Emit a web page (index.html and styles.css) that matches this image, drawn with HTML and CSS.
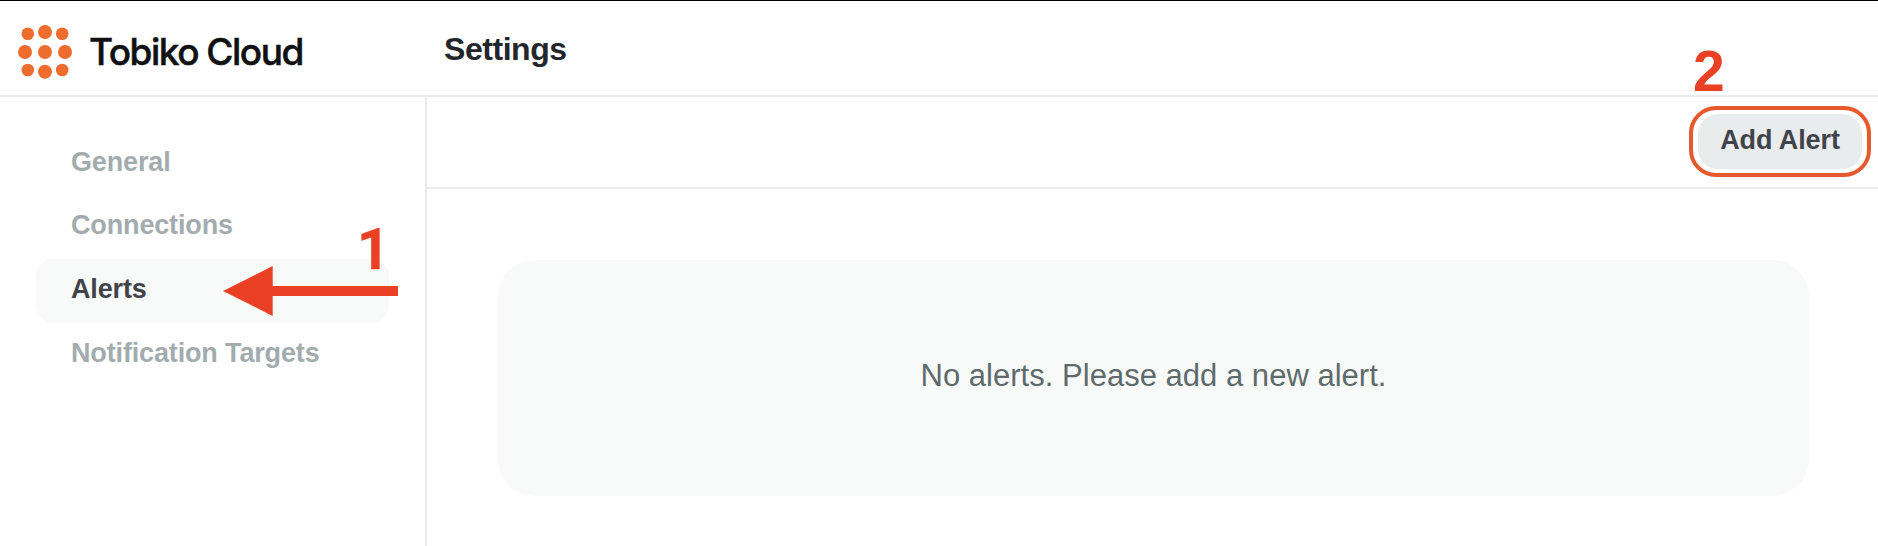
FILE: index.html
```html
<!DOCTYPE html>
<html lang="en">
<head>
<meta charset="utf-8">
<title>Tobiko Cloud – Settings</title>
<link rel="stylesheet" href="styles.css">
</head>
<body>
<div class="app">
  <header class="header">
    <div class="brand">
      <svg class="brand-mark" width="54" height="54" viewBox="0 0 54 54" aria-hidden="true">
        <circle cx="9.8" cy="8.7" r="6.3"/><circle cx="27" cy="7" r="7"/><circle cx="44.2" cy="8.7" r="6.3"/>
        <circle cx="7" cy="27" r="7"/><circle cx="27" cy="27" r="7"/><circle cx="47" cy="27" r="7"/>
        <circle cx="9.8" cy="45" r="6.3"/><circle cx="27" cy="46.7" r="7"/><circle cx="44.2" cy="45" r="6.3"/>
      </svg>
      <span class="brand-name">Tobiko Cloud</span>
    </div>
    <h1 class="title">Settings</h1>
  </header>
  <div class="body">
    <nav class="sidebar">
      <a class="nav-item first">General</a>
      <a class="nav-item">Connections</a>
      <a class="nav-item active">Alerts</a>
      <a class="nav-item">Notification Targets</a>
    </nav>
    <main class="main">
      <div class="toolbar">
        <div class="highlight"><button class="button">Add Alert</button></div>
      </div>
      <section class="content">
        <p class="empty"><span class="empty-text">No alerts. Please add a new alert.</span></p>
      </section>
    </main>
  </div>
  <svg class="arrow" width="175" height="50" viewBox="0 0 175 50" aria-hidden="true">
    <path d="M0 25 49.7 0V20H175V30H49.7V50Z"/>
  </svg>
  <span class="step step-one">1</span>
  <span class="step step-two">2</span>
</div>
</body>
</html>
```
FILE: styles.css
```css
* { box-sizing: border-box; }

body {
  margin: 0;
  background: #fff;
  font-family: "Liberation Sans", Arial, sans-serif;
}

.app {
  position: relative;
  display: flex;
  flex-direction: column;
  height: 546px;
  overflow: hidden;
}

.header {
  display: flex;
  align-items: center;
  height: 97px;
  border-top: 1px solid #000;
  border-bottom: 2px solid #e8ecec;
}

.brand {
  display: flex;
  align-items: center;
  gap: 17px;
  width: 444px;
  padding: 7px 0 0 18px;
}

.brand-mark { fill: #ee6c2d; }

.brand-name {
  font: 500 37px/44px Inter, sans-serif;
  letter-spacing: -1.5px;
  -webkit-text-stroke: 0.5px #101112;
  color: #101112;
  white-space: nowrap;
}

.title {
  margin: 0;
  padding-top: 1px;
  font-size: 32px;
  line-height: 36px;
  letter-spacing: -0.45px;
  color: #23262b;
}

.body {
  display: flex;
  flex: 1;
}

.sidebar {
  display: flex;
  flex-direction: column;
  width: 427px;
  padding: 34px 36px 0;
  border-right: 2px solid #e8ecec;
}

.nav-item {
  height: 64px;
  padding: 0 35px;
  border-radius: 17px;
  font-size: 27px;
  font-weight: 700;
  line-height: 61px;
  letter-spacing: -0.15px;
  white-space: nowrap;
  color: #a2acae;
}

.nav-item.first { line-height: 63px; }

.nav-item.active {
  background: #f8faf9;
  color: #40444a;
}

.main {
  display: flex;
  flex: 1;
  flex-direction: column;
}

.toolbar {
  display: flex;
  justify-content: flex-end;
  height: 92px;
  padding: 9px 7px 0 0;
  border-bottom: 2px solid #e8ecec;
}

.highlight {
  width: 182px;
  height: 71px;
  padding: 4px 5px;
  border: 4px solid #e6592c;
  border-radius: 27px;
}

.button {
  display: block;
  width: 164px;
  height: 55px;
  padding: 0 0 3px;
  border: 0;
  border-radius: 20px;
  background: #e8ecec;
  font: 700 27px/52px "Liberation Sans", Arial, sans-serif;
  letter-spacing: -0.1px;
  color: #40444a;
}

.content { padding: 71px 69px 0 71px; }

.empty {
  display: flex;
  align-items: center;
  justify-content: center;
  height: 236px;
  margin: 0;
  padding-bottom: 4px;
  border-radius: 36px;
  background: #f8faf9;
  font-size: 31px;
  line-height: 36px;
  letter-spacing: 0.02px;
  color: #5e6a6c;
}

/* Walkthrough annotations drawn over the interface */
.arrow {
  position: absolute;
  left: 223px;
  top: 266px;
  fill: #ea4025;
}

.step {
  position: absolute;
  font-size: 57px;
  font-weight: 700;
  line-height: 60px;
  color: #ea4025;
}

.step-one {
  left: 357px;
  top: 220px;
  font-family: Roboto, sans-serif;
  -webkit-text-stroke: 0.4px #ea4025;
}

.step-two { left: 1693px; top: 41px; }
```
